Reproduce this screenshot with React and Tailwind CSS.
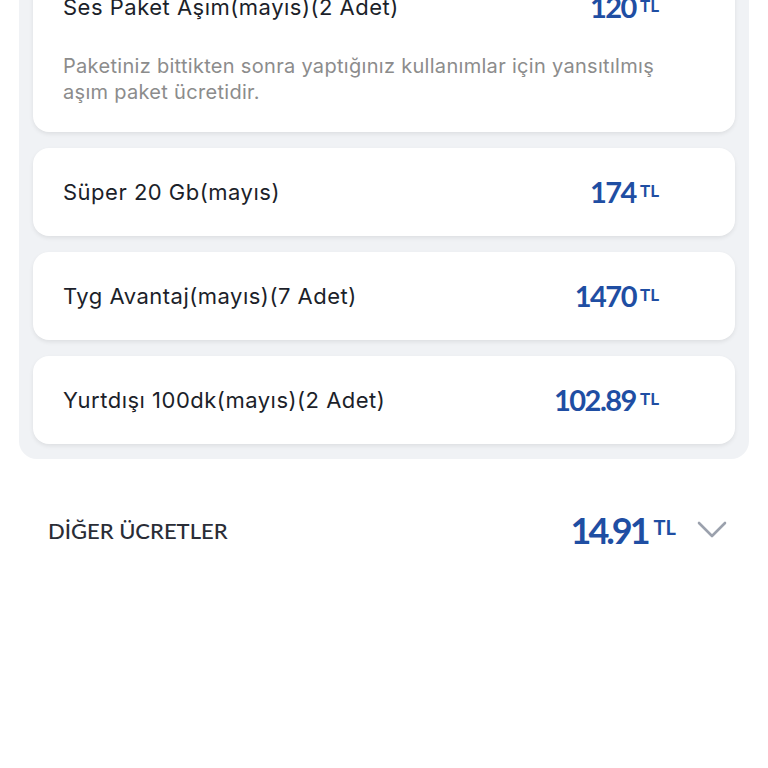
import React from "react";

function Amount({ value }) {
  return (
    <div className="flex items-start gap-[4px] text-[#1f4ea3]" style={{ fontFamily: "Lato, sans-serif" }}>
      <span className="text-[29px] leading-[34px] font-bold tracking-[-1.5px]">{value}</span>
      <span className="text-[17px] leading-[17px] font-bold mt-[7px]">TL</span>
    </div>
  );
}

function Card({ title, value, desc }) {
  return (
    <div className="bg-white rounded-[16px] shadow-[0_2px_4px_rgba(0,0,0,0.08)] pl-[30px] pr-[76px]">
      <div className="h-[88px] flex items-center justify-between">
        <span className="text-[22px] text-[#1c1f2a] tracking-[0.5px]" style={{ fontFamily: "Inter, sans-serif" }}>{title}</span>
        <Amount value={value} />
      </div>
      {desc && (
        <div className="text-[20px] leading-[26px] text-[#8c8c8c] pt-[2px] pb-[27px] -mr-[70px] tracking-[0.3px]" style={{ fontFamily: "Inter, sans-serif" }}>
          {desc}
        </div>
      )}
    </div>
  );
}

export default function App() {
  return (
    <div className="w-[768px] h-[768px] overflow-hidden bg-white" style={{ fontFamily: "Lato, 'Noto Sans', sans-serif" }}>
      <div className="-mt-[51px] mx-[19px] bg-[#f0f2f5] rounded-b-[18px] px-[14px] pt-[14px] pb-[15px] flex flex-col gap-[16px]">
        <Card
          title="Ses Paket Aşım(mayıs)(2 Adet)"
          value="120"
          desc={
            <>
              Paketiniz bittikten sonra yaptığınız kullanımlar için yansıtılmış
              <br />
              aşım paket ücretidir.
            </>
          }
        />
        <Card title="Süper 20 Gb(mayıs)" value="174" />
        <Card title="Tyg Avantaj(mayıs)(7 Adet)" value="1470" />
        <Card title="Yurtdışı 100dk(mayıs)(2 Adet)" value="102.89" />
      </div>
      <div className="mt-[50px] pl-[48px] pr-[41px] h-[42px] flex items-center justify-between">
        <span className="text-[22px] text-[#2a2d36] font-medium">DİĞER ÜCRETLER</span>
        <div className="flex items-center">
          <div className="flex items-start gap-[6px] text-[#1f4ea3]">
            <span className="text-[36px] leading-[42px] font-bold tracking-[-3px]">14.91</span>
            <span className="text-[20px] leading-[20px] font-bold mt-[8px]">TL</span>
          </div>
          <svg className="ml-[21px]" width="30" height="18" viewBox="0 0 30 18" fill="none">
            <path d="M2 2 L15 15 L28 2" stroke="#9ba1ad" strokeWidth="2.6" strokeLinecap="round" strokeLinejoin="round" />
          </svg>
        </div>
      </div>
    </div>
  );
}
